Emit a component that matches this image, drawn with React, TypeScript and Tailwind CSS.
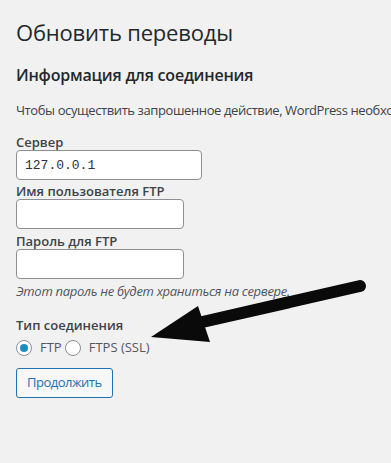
import { useState } from 'react';

export default function App() {
  const [server, setServer] = useState('127.0.0.1');
  const [user, setUser] = useState('');
  const [pass, setPass] = useState('');
  const [mode, setMode] = useState<'ftp' | 'ftps'>('ftp');

  const font = { fontFamily: '"Open Sans", "Noto Sans", sans-serif' };

  return (
    <div className="relative min-h-[463px] w-[391px] overflow-hidden bg-[#f1f1f1] px-4 text-[#1d2327]" style={font}>
      <h1 className="pt-[18px] text-[22px] leading-[29px] font-normal text-[#23282d] tracking-[-0.2px]">
        Обновить переводы
      </h1>

      <h2 className="mt-[17px] text-[16px] leading-[22px] font-semibold text-[#23282d] tracking-[-0.2px]">
        Информация для соединения
      </h2>

      <p className="mt-[14px] whitespace-nowrap text-[13px] leading-[20px] text-[#3c434a] tracking-[-0.4px]">
        Чтобы осуществить запрошенное действие, WordPress необходим доступ к веб-серверу.
      </p>

      {/* Form fields */}
      <label className="mt-[14px] block text-[13px] leading-[16px] font-semibold text-[#3c434a]">Сервер</label>
      <input
        value={server}
        onChange={(e) => setServer(e.target.value)}
        className="block h-[30px] w-[186px] rounded-[4px] border border-[#8c8f94] bg-white pl-[8px] text-[13px] text-[#2c3338] outline-none"
        style={{ fontFamily: '"Liberation Mono", monospace' }}
      />

      <label className="mt-[3px] block text-[13px] leading-[16px] font-semibold text-[#3c434a]">Имя пользователя FTP</label>
      <input
        value={user}
        onChange={(e) => setUser(e.target.value)}
        className="block h-[30px] w-[168px] rounded-[4px] border border-[#8c8f94] bg-white px-2 text-[13px] outline-none"
      />

      <label className="mt-1 block text-[13px] leading-[16px] font-semibold text-[#3c434a]">Пароль для FTP</label>
      <input
        type="password"
        value={pass}
        onChange={(e) => setPass(e.target.value)}
        className="block h-[30px] w-[168px] rounded-[4px] border border-[#8c8f94] bg-white px-2 text-[13px] outline-none"
      />
      <p className="mt-[3px] text-[13px] leading-[18px] italic text-[#50575e] tracking-[-0.3px]">
        Этот пароль не будет храниться на сервере.
      </p>

      <div className="mt-4 text-[13px] leading-[18px] font-semibold text-[#3c434a]">Тип соединения</div>
      <div className="mt-1 flex h-5 items-center text-[13px] text-[#50575e]">
        <button
          onClick={() => setMode('ftp')}
          className="flex h-4 w-4 items-center justify-center rounded-full border border-[#8c8f94] bg-white"
        >
          {mode === 'ftp' && <span className="h-2 w-2 rounded-full bg-[#1e8cbe]" />}
        </button>
        <span className="ml-2">FTP</span>
        <button
          onClick={() => setMode('ftps')}
          className="ml-[3px] flex h-4 w-4 items-center justify-center rounded-full border border-[#8c8f94] bg-white"
        >
          {mode === 'ftps' && <span className="h-2 w-2 rounded-full bg-[#1e8cbe]" />}
        </button>
        <span className="ml-2">FTPS (SSL)</span>
      </div>

      <button className="mt-[10px] h-[30px] rounded-[3px] border border-[#2271b1] bg-[#f6f7f7] px-[10px] text-[13px] text-[#2271b1] tracking-[-0.5px]">
        Продолжить
      </button>

      {/* annotation arrow */}
      <svg className="pointer-events-none absolute left-0 top-0" width="391" height="463">
        <line x1="360" y1="286" x2="198" y2="323" stroke="#0a0a0a" strokeWidth="12" strokeLinecap="round" />
        <polygon points="151,337 198,306 210,342" fill="#0a0a0a" />
      </svg>
    </div>
  );
}
